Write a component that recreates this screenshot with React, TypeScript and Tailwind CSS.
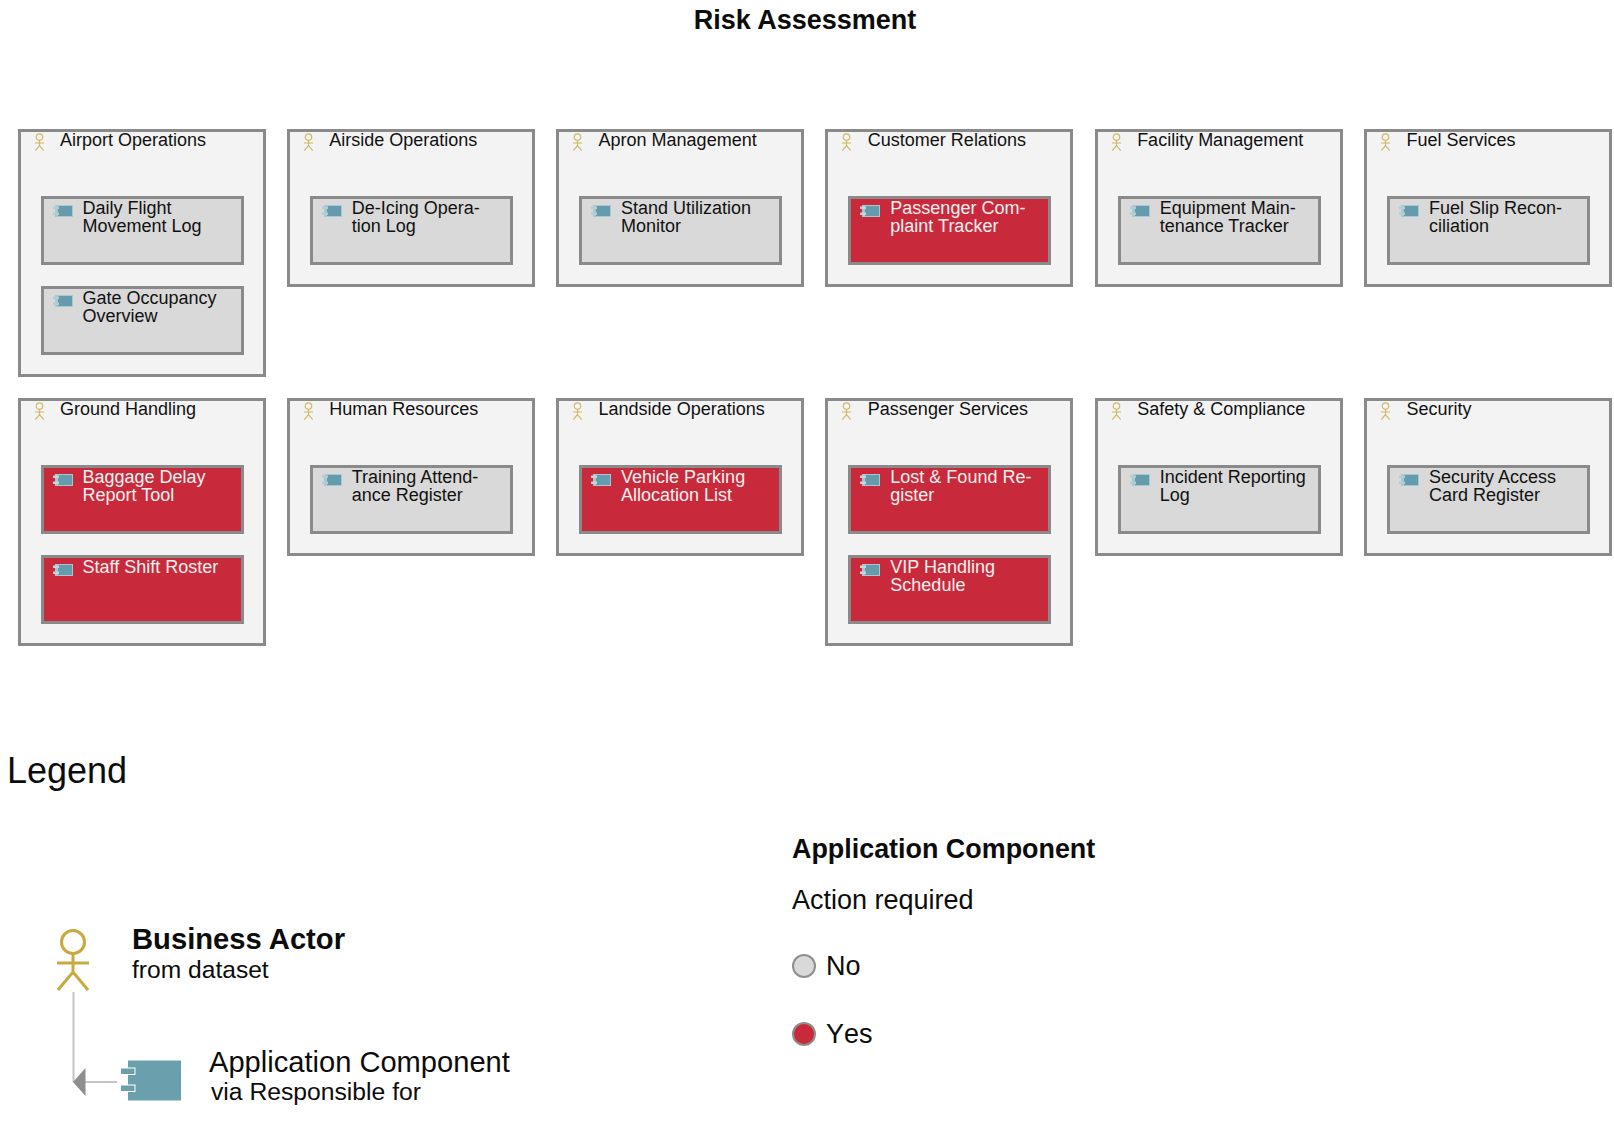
const groups = [
  { name: "Airport Operations", apps: [{ lines: ["Daily Flight", "Movement Log"] }, { lines: ["Gate Occupancy", "Overview"] }] },
  { name: "Airside Operations", apps: [{ lines: ["De-Icing Opera-", "tion Log"] }] },
  { name: "Apron Management", apps: [{ lines: ["Stand Utilization", "Monitor"] }] },
  { name: "Customer Relations", apps: [{ lines: ["Passenger Com-", "plaint Tracker"], red: true }] },
  { name: "Facility Management", apps: [{ lines: ["Equipment Main-", "tenance Tracker"] }] },
  { name: "Fuel Services", apps: [{ lines: ["Fuel Slip Recon-", "ciliation"] }] },
  { name: "Ground Handling", apps: [{ lines: ["Baggage Delay", "Report Tool"], red: true }, { lines: ["Staff Shift Roster"], red: true }] },
  { name: "Human Resources", apps: [{ lines: ["Training Attend-", "ance Register"] }] },
  { name: "Landside Operations", apps: [{ lines: ["Vehicle Parking", "Allocation List"], red: true }] },
  { name: "Passenger Services", apps: [{ lines: ["Lost & Found Re-", "gister"], red: true }, { lines: ["VIP Handling", "Schedule"], red: true }] },
  { name: "Safety & Compliance", apps: [{ lines: ["Incident Reporting", "Log"] }] },
  { name: "Security", apps: [{ lines: ["Security Access", "Card Register"] }] },
];

function ActorIcon({ className, stroke = 3 }: { className: string; stroke?: number }) {
  return (
    <svg viewBox="0 0 32 63" className={className} fill="none" stroke="#c9a93f" strokeWidth={stroke}>
      <circle cx="16" cy="14" r="11.5" />
      <path d="M16 26V44M0 35H32M1 62L16 44L31 62" />
    </svg>
  );
}

function SmallComponentIcon({ red }: { red?: boolean }) {
  const tab = red ? "#c9d3d8" : "#b3cdd5";
  return (
    <svg viewBox="0 0 20 12" className="w-5 h-3 shrink-0">
      <rect x="2" y="0" width="18" height="12" fill={red ? "#a9c6cf" : "#a9c9d2"} />
      <rect x="5" y="1" width="14" height="10" fill="#659cad" />
      <rect x="0" y="1.5" width="6" height="2.5" fill={tab} />
      <rect x="0" y="7.5" width="6" height="2.5" fill={tab} />
    </svg>
  );
}

function AppBox({ lines, red }: { lines: string[]; red?: boolean }) {
  return (
    <div
      className={`h-[69px] border-[3px] border-[#8a8a8a] flex pl-[9px] text-[18px] leading-[18px] ${
        red ? "bg-[#c82a3b] text-[#f8f0f0]" : "bg-[#d9d9d9] text-[#111]"
      }`}
    >
      <div className="mt-[6px]">
        <SmallComponentIcon red={red} />
      </div>
      <div className="ml-[10px]">
        {lines.map((l) => (
          <div key={l}>{l}</div>
        ))}
      </div>
    </div>
  );
}

function GroupBox({ name, apps }: { name: string; apps: { lines: string[]; red?: boolean }[] }) {
  return (
    <div className="border-[3px] border-[#8a8a8a] bg-[#f3f3f3] pl-[20px] pr-[19px] pb-[19px]">
      <div className="h-[64px] flex items-start -ml-[6px]">
        <ActorIcon className="w-[9px] h-[18px] mt-[1px] shrink-0 opacity-80" stroke={4} />
        <span className="ml-[16.5px] -mt-[1px] text-[18px] leading-[18px] text-[#111]">{name}</span>
      </div>
      <div className="flex flex-col gap-[21px]">
        {apps.map((a) => (
          <AppBox key={a.lines[0]} lines={a.lines} red={a.red} />
        ))}
      </div>
    </div>
  );
}

export default function App() {
  return (
    <div className="w-[1614px] h-[1142px] overflow-hidden bg-white text-[#0c0c0c] font-['Liberation_Sans',Arial,sans-serif]">
      <h1 className="h-10 pr-1 text-center text-[27px] leading-10 font-bold">Risk Assessment</h1>

      <div className="mt-[89px] ml-[17.5px] w-[1594.5px] grid grid-cols-6 gap-x-[21.2px] gap-y-[21px] items-start">
        {groups.map((g) => (
          <GroupBox key={g.name} name={g.name} apps={g.apps} />
        ))}
      </div>

      <h2 className="mt-[105px] ml-[7px] text-[36px] leading-10">Legend</h2>

      <div className="flex">
        {/* how to read: actor and component */}
        <div className="w-[792px] shrink-0 pt-[131px]">
          <div className="flex items-start pl-[57px]">
            <ActorIcon className="w-8 h-[63px] mt-[6px] shrink-0" />
            <div className="ml-[43px]">
              <div className="text-[29.2px] leading-[34px] font-bold">Business Actor</div>
              <div className="text-[24.6px] leading-[28px]">from dataset</div>
            </div>
          </div>
          <div className="flex items-start pl-[70px] -mt-[2px]">
            <svg viewBox="0 0 115 115" className="w-[115px] h-[115px] shrink-0">
              <path d="M3.5 3V93M15 93H47" stroke="#c4c4c4" strokeWidth="2" fill="none" />
              <path d="M3 93L15.5 79V107Z" fill="#8e8e8e" />
              <rect x="58" y="71.5" width="53" height="40" fill="#6a9fae" />
              <rect x="50.5" y="79" width="14.5" height="6.5" fill="#6a9fae" stroke="#fff" strokeWidth="1" />
              <rect x="50.5" y="96" width="14.5" height="6.5" fill="#6a9fae" stroke="#fff" strokeWidth="1" />
            </svg>
            <div className="ml-[24px] mt-[56px]">
              <div className="text-[29.1px] leading-[34px]">Application Component</div>
              <div className="pl-[2px] text-[24.7px] leading-[28px] -mt-[1px]">via Responsible for</div>
            </div>
          </div>
        </div>

        {/* colour key */}
        <div className="pt-[42px]">
          <div className="text-[26.9px] leading-8 font-bold">Application Component</div>
          <div className="mt-[19px] text-[27px] leading-8">Action required</div>
          <div className="mt-[34px] flex items-center h-8">
            <span className="w-6 h-6 rounded-full border-2 border-[#8e8e8e] bg-[#d9d9d9]" />
            <span className="ml-[10px] text-[27px] leading-8">No</span>
          </div>
          <div className="mt-[36px] flex items-center h-8">
            <span className="w-6 h-6 rounded-full border-2 border-[#8e8e8e] bg-[#c82a3b]" />
            <span className="ml-[10px] text-[27px] leading-8 [font-kerning:none]">Yes</span>
          </div>
        </div>
      </div>
    </div>
  );
}
